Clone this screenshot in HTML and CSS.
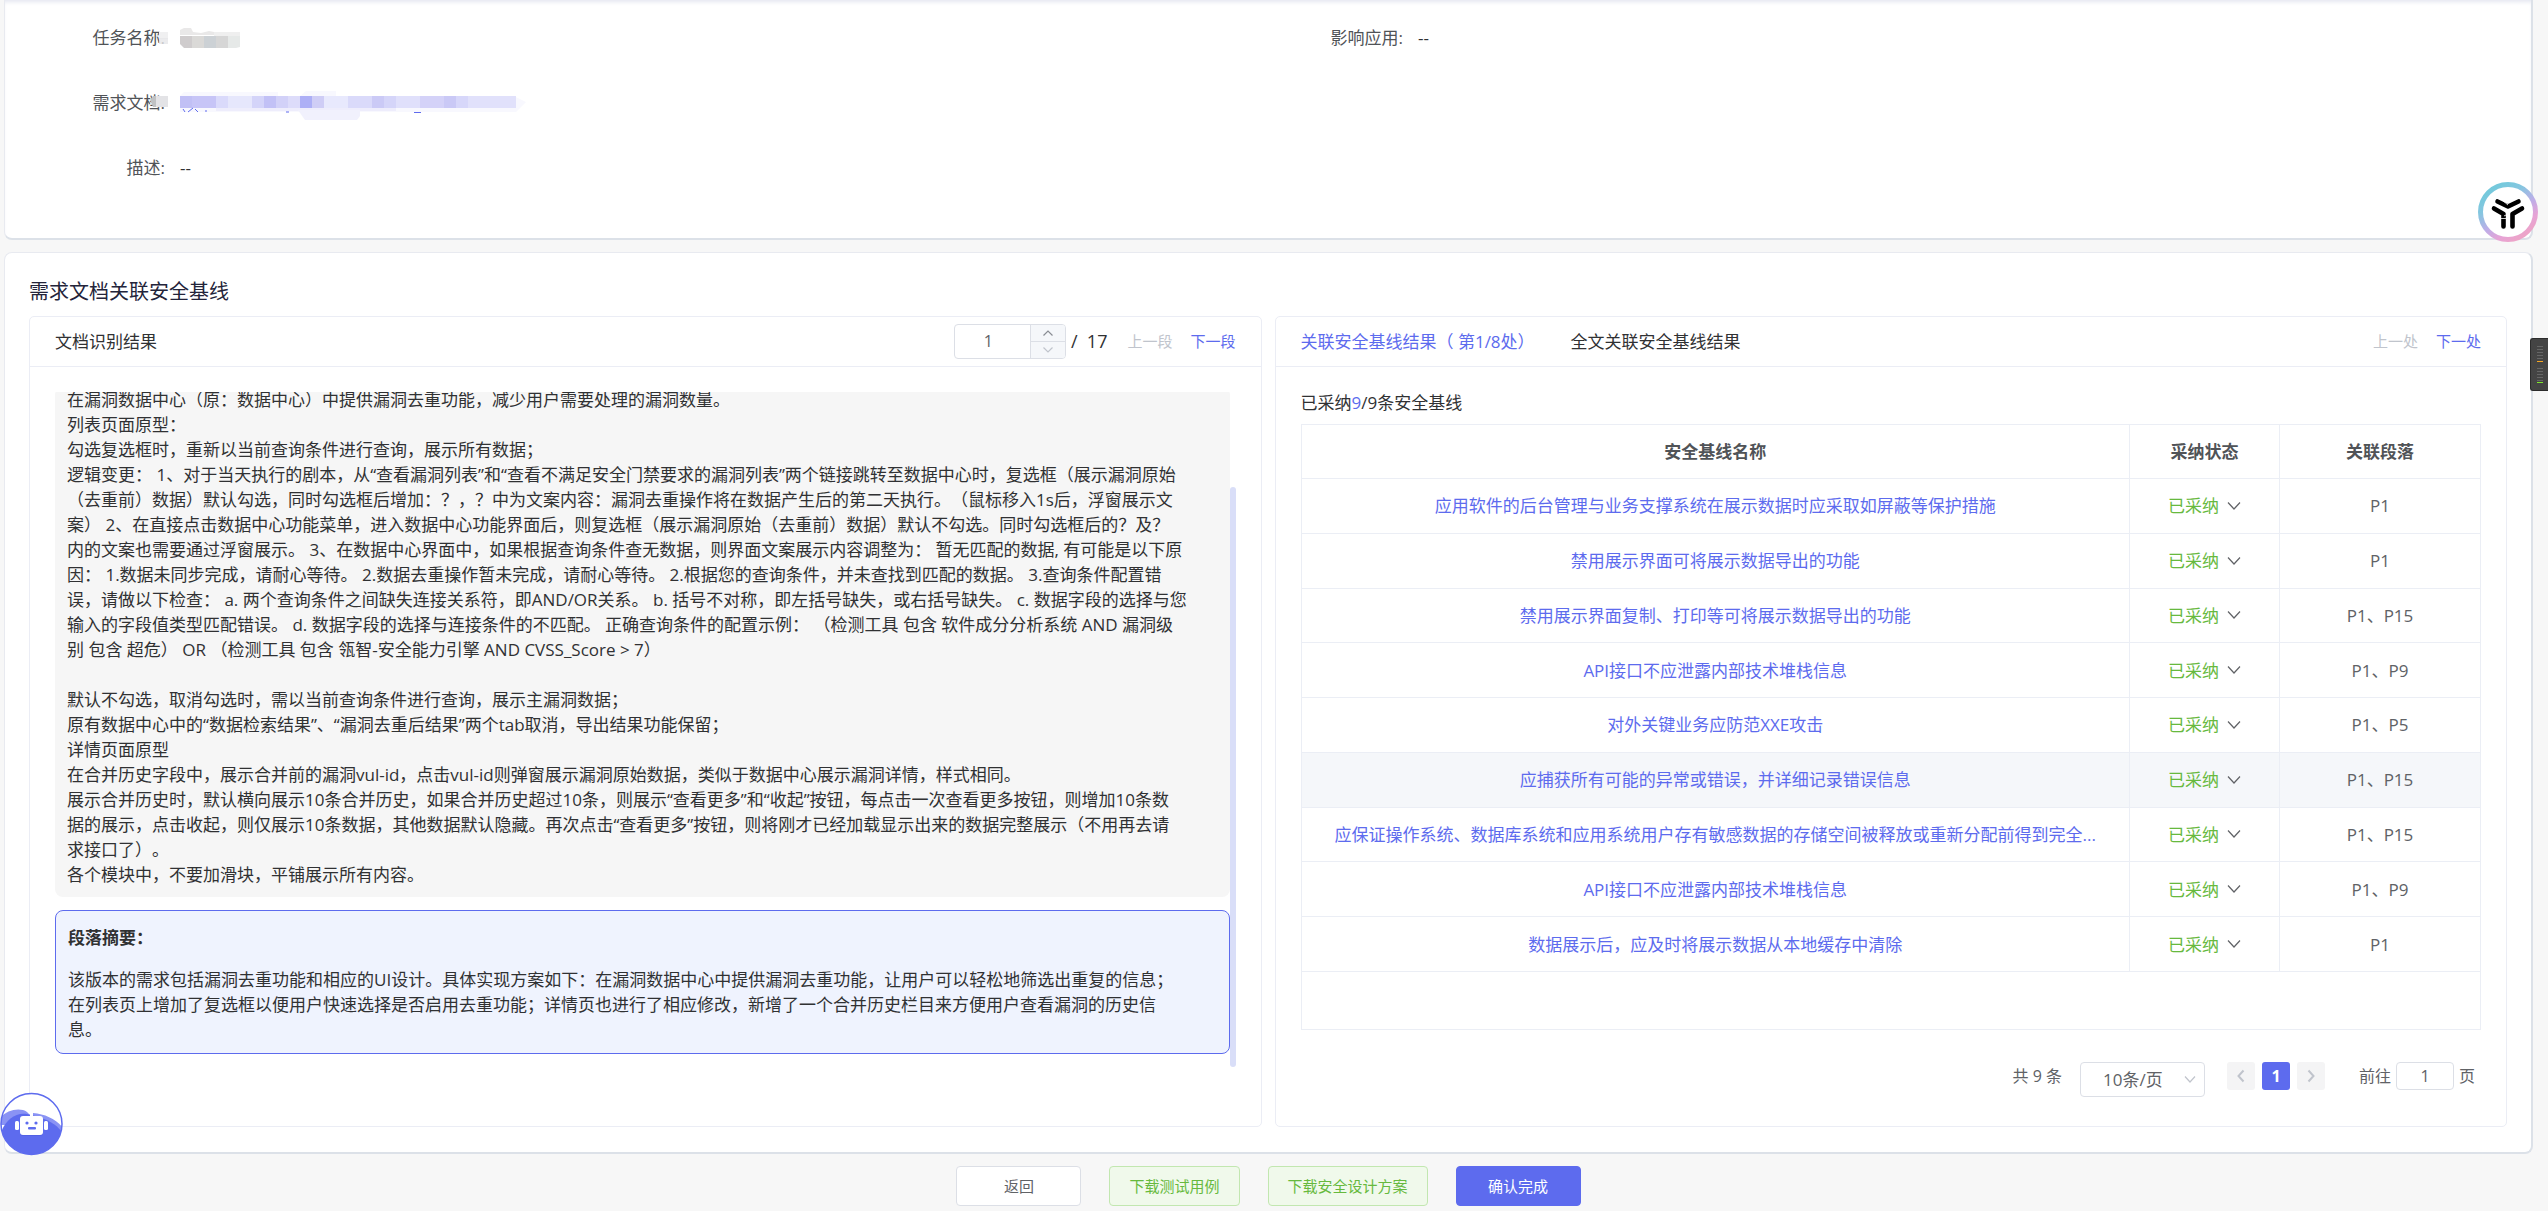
FILE: index.html
```html
<!DOCTYPE html>
<html lang="zh-CN">
<head>
<meta charset="utf-8">
<title>需求文档关联安全基线</title>
<link rel="stylesheet" href="styles.css">
</head>
<body>
<main class="page">
  <section class="card info">
    <dl class="info-col">
      <div class="info-row">
        <dt>任务名称:</dt>
        <dd>
          <svg class="mask" width="90" height="24" viewBox="-22 0 90 24" aria-hidden="true">
            <path fill="#f0f0f1" d="M-21 4h9v7h-9z"/><path fill="#e6e6e8" d="M-21 10h9v6h-9z" opacity=".8"/>
            <path fill="#e9e8e8" d="M0 7V2l4-2h7l2 4 8 1 8-2 5 1v3z"/><path fill="#efefef" d="M34 4h26v4H34z"/>
            <path fill="#cfcccd" d="M0 8h12v12H4l-4-4z"/><path fill="#dad9d7" d="M12 8h12v12H12z"/><path fill="#ccd1d5" d="M24 8h12v12H24z"/><path fill="#d6d6d6" d="M36 8h12v12H36z"/><path fill="#e6e9e8" d="M48 8h12v11l-4 1h-8z"/>
          </svg>
        </dd>
      </div>
      <div class="info-row">
        <dt>需求文档:</dt>
        <dd>
          <svg class="mask wide" width="370" height="30" viewBox="-32 0 370 30" aria-hidden="true">
            <path fill="#c0c2c4" d="M-30 8l3-4h3v11h-3z"/><path fill="#e3e3e6" d="M-24 4h12v11h-12z"/>
            <path fill="#f8f8fe" d="M4 0h94v4h22l6-5h30v5h178l12 6-10 10H0V4z"/>
            <g><path fill="#c1c0f5" d="M0 4h12v12H0z"/><path fill="#c7c5f7" d="M12 4h24v12H12z"/><path fill="#dadafb" d="M36 4h12v12H36z"/><path fill="#e6e7fc" d="M48 4h24v12H48z"/><path fill="#d4d4f9" d="M72 4h12v12H72z"/><path fill="#c2c1f6" d="M84 4h12v12H84z"/><path fill="#d2d1f8" d="M96 4h12v12H96z"/><path fill="#dddcfa" d="M108 4h12v12h-12z"/><path fill="#adaff6" d="M120 4h12v12h-12z"/><path fill="#cfcdf6" d="M132 4h12v12h-12z"/><path fill="#e8e9fd" d="M144 4h24v12h-24z"/><path fill="#dadafa" d="M168 4h24v12h-24z"/><path fill="#cbcaf6" d="M192 4h12v12h-12z"/><path fill="#d5d5f9" d="M204 4h12v12h-12z"/><path fill="#e0e0fb" d="M216 4h24v12h-24z"/><path fill="#d4d2f8" d="M240 4h24v12h-24z"/><path fill="#cac9f6" d="M264 4h12v12h-12z"/><path fill="#d7d7fa" d="M276 4h12v12h-12z"/><path fill="#e1e1fb" d="M288 4h48v12h-48z"/></g>
            <path fill="#eeedfc" d="M36 16h180v3H36z"/><path fill="#f1f1fd" d="M118 18h62v6l-3 4h-52z"/>
            <path stroke="#5f6bee" d="M3 17l2 3M13 16l-5 4M15 17l3 3M26 18v2M106 20h3M234 20.500h7"/>
          </svg>
        </dd>
      </div>
      <div class="info-row"><dt>描述:</dt><dd>--</dd></div>
    </dl>
    <dl class="info-col">
      <div class="info-row"><dt>影响应用:</dt><dd>--</dd></div>
    </dl>
  </section>

  <section class="card work">
    <h1>需求文档关联安全基线</h1>
    <div class="panels">
      <section class="panel">
        <header class="panel-head">
          <h2>文档识别结果</h2>
          <div class="pager">
            <div class="stepper">
              <input type="text" value="1" aria-label="当前段落">
              <div class="steps">
                <button type="button" aria-label="增加"><svg width="12" height="8" viewBox="0 0 12 8"><path d="M1.500 6.500L6 2l4.500 4.500" fill="none" stroke="#8a8d94" stroke-width="1.200"/></svg></button>
                <button type="button" aria-label="减少"><svg width="12" height="8" viewBox="0 0 12 8"><path d="M1.500 1.500L6 6l4.500-4.500" fill="none" stroke="#c0c4cc" stroke-width="1.200"/></svg></button>
              </div>
            </div>
            <span class="total">/&nbsp; 17</span>
            <button type="button" class="text-btn" disabled>上一段</button>
            <button type="button" class="text-btn">下一段</button>
          </div>
        </header>
        <div class="scroller">
          <div class="scroll-content">
            <div class="doc">在漏洞数据中心（原：数据中心）中提供漏洞去重功能，减少用户需要处理的漏洞数量。
列表页面原型：
勾选复选框时，重新以当前查询条件进行查询，展示所有数据；
逻辑变更： 1、对于当天执行的剧本，从“查看漏洞列表”和“查看不满足安全门禁要求的漏洞列表”两个链接跳转至数据中心时，复选框（展示漏洞原始
（去重前）数据）默认勾选，同时勾选框后增加：？，？中为文案内容：漏洞去重操作将在数据产生后的第二天执行。（鼠标移入1s后，浮窗展示文
案） 2、在直接点击数据中心功能菜单，进入数据中心功能界面后，则复选框（展示漏洞原始（去重前）数据）默认不勾选。同时勾选框后的？及？
内的文案也需要通过浮窗展示。 3、在数据中心界面中，如果根据查询条件查无数据，则界面文案展示内容调整为： 暂无匹配的数据, 有可能是以下原
因： 1.数据未同步完成，请耐心等待。 2.数据去重操作暂未完成，请耐心等待。 2.根据您的查询条件，并未查找到匹配的数据。 3.查询条件配置错
误，请做以下检查： a. 两个查询条件之间缺失连接关系符，即AND/OR关系。 b. 括号不对称，即左括号缺失，或右括号缺失。 c. 数据字段的选择与您
输入的字段值类型匹配错误。 d. 数据字段的选择与连接条件的不匹配。 正确查询条件的配置示例： （检测工具 包含 软件成分分析系统 AND 漏洞级
别 包含 超危） OR （检测工具 包含 瓴智-安全能力引擎 AND CVSS_Score &gt; 7）

默认不勾选，取消勾选时，需以当前查询条件进行查询，展示主漏洞数据；
原有数据中心中的“数据检索结果”、“漏洞去重后结果”两个tab取消，导出结果功能保留；
详情页面原型
在合并历史字段中，展示合并前的漏洞vul-id，点击vul-id则弹窗展示漏洞原始数据，类似于数据中心展示漏洞详情，样式相同。
展示合并历史时，默认横向展示10条合并历史，如果合并历史超过10条，则展示“查看更多”和“收起”按钮，每点击一次查看更多按钮，则增加10条数
据的展示，点击收起，则仅展示10条数据，其他数据默认隐藏。再次点击“查看更多”按钮，则将刚才已经加载显示出来的数据完整展示（不用再去请
求接口了）。
各个模块中，不要加滑块，平铺展示所有内容。</div>
            <div class="abstract">
              <h3>段落摘要：</h3>
              <p>该版本的需求包括漏洞去重功能和相应的UI设计。具体实现方案如下：在漏洞数据中心中提供漏洞去重功能，让用户可以轻松地筛选出重复的信息；
在列表页上增加了复选框以便用户快速选择是否启用去重功能；详情页也进行了相应修改，新增了一个合并历史栏目来方便用户查看漏洞的历史信
息。</p>
            </div>
          </div>
          <div class="scrollbar"><div class="thumb"></div></div>
        </div>
      </section>

      <section class="panel">
        <header class="panel-head">
          <nav class="tabs">
            <a href="#part" class="active">关联安全基线结果（ 第1/8处）</a>
            <a href="#all">全文关联安全基线结果</a>
          </nav>
          <div class="pager">
            <button type="button" class="text-btn" disabled>上一处</button>
            <button type="button" class="text-btn">下一处</button>
          </div>
        </header>
        <div class="result">
          <p class="adopted">已采纳<span>9</span>/9条安全基线</p>
          <div class="table-box">
            <table>
              <colgroup><col><col class="c-state"><col class="c-para"></colgroup>
              <thead><tr><th>安全基线名称</th><th>采纳状态</th><th>关联段落</th></tr></thead>
              <tbody>
                <tr><td><a href="#b1">应用软件的后台管理与业务支撑系统在展示数据时应采取如屏蔽等保护措施</a></td><td><button type="button" class="state">已采纳<svg width="14" height="10" viewBox="0 0 14 10"><path d="M1 1.500l6 6.500 6-6.500"/></svg></button></td><td>P1</td></tr>
                <tr><td><a href="#b2">禁用展示界面可将展示数据导出的功能</a></td><td><button type="button" class="state">已采纳<svg width="14" height="10" viewBox="0 0 14 10"><path d="M1 1.500l6 6.500 6-6.500"/></svg></button></td><td>P1</td></tr>
                <tr><td><a href="#b3">禁用展示界面复制、打印等可将展示数据导出的功能</a></td><td><button type="button" class="state">已采纳<svg width="14" height="10" viewBox="0 0 14 10"><path d="M1 1.500l6 6.500 6-6.500"/></svg></button></td><td>P1、P15</td></tr>
                <tr><td><a href="#b4">API接口不应泄露内部技术堆栈信息</a></td><td><button type="button" class="state">已采纳<svg width="14" height="10" viewBox="0 0 14 10"><path d="M1 1.500l6 6.500 6-6.500"/></svg></button></td><td>P1、P9</td></tr>
                <tr><td><a href="#b5">对外关键业务应防范XXE攻击</a></td><td><button type="button" class="state">已采纳<svg width="14" height="10" viewBox="0 0 14 10"><path d="M1 1.500l6 6.500 6-6.500"/></svg></button></td><td>P1、P5</td></tr>
                <tr class="hover"><td><a href="#b6">应捕获所有可能的异常或错误，并详细记录错误信息</a></td><td><button type="button" class="state">已采纳<svg width="14" height="10" viewBox="0 0 14 10"><path d="M1 1.500l6 6.500 6-6.500"/></svg></button></td><td>P1、P15</td></tr>
                <tr><td><a href="#b7">应保证操作系统、数据库系统和应用系统用户存有敏感数据的存储空间被释放或重新分配前得到完全...</a></td><td><button type="button" class="state">已采纳<svg width="14" height="10" viewBox="0 0 14 10"><path d="M1 1.500l6 6.500 6-6.500"/></svg></button></td><td>P1、P15</td></tr>
                <tr><td><a href="#b8">API接口不应泄露内部技术堆栈信息</a></td><td><button type="button" class="state">已采纳<svg width="14" height="10" viewBox="0 0 14 10"><path d="M1 1.500l6 6.500 6-6.500"/></svg></button></td><td>P1、P9</td></tr>
                <tr><td><a href="#b9">数据展示后，应及时将展示数据从本地缓存中清除</a></td><td><button type="button" class="state">已采纳<svg width="14" height="10" viewBox="0 0 14 10"><path d="M1 1.500l6 6.500 6-6.500"/></svg></button></td><td>P1</td></tr>
              </tbody>
            </table>
          </div>
          <div class="pagination">
            <span class="count">共 9 条</span>
            <div class="size">
              <select aria-label="每页条数"><option>10条/页</option></select>
              <svg width="12" height="10" viewBox="0 0 12 10"><path d="M1 1.500l5 5.500 5-5.500" fill="none" stroke="#c0c4cc" stroke-width="1.200"/></svg>
            </div>
            <div class="pages">
              <button type="button" aria-label="前一页" disabled><svg width="10" height="14" viewBox="0 0 10 14"><path d="M7.500 1.500L2.500 7l5 5.500"/></svg></button>
              <button type="button" class="current">1</button>
              <button type="button" aria-label="后一页" disabled><svg width="10" height="14" viewBox="0 0 10 14"><path d="M2.500 1.500l5 5.500-5 5.500"/></svg></button>
            </div>
            <label class="jump">前往<input type="text" value="1">页</label>
          </div>
        </div>
      </section>
    </div>
  </section>

  <footer class="actions">
    <button type="button" class="btn">返回</button>
    <button type="button" class="btn success">下载测试用例</button>
    <button type="button" class="btn success">下载安全设计方案</button>
    <button type="button" class="btn primary">确认完成</button>
  </footer>
</main>

<a href="#bot" class="float robot" aria-label="智能助手">
  <svg width="63" height="64" viewBox="0 0 63 64">
    <defs><clipPath id="face"><circle cx="31.500" cy="32" r="30.500"/></clipPath></defs>
    <circle cx="31.500" cy="32" r="30.500" fill="#fff"/>
    <g clip-path="url(#face)">
      <path fill="#8a93f4" d="M0 27c5-9 20-12 27-7l3 3v10H0zM33 21c12 1 23 6 30 15v6L33 28z"/>
      <path fill="#5d6bee" d="M2 38c4-10 14-18 25-16l8 2c12 3 21 8 27 16v25H0z"/>
    </g>
    <circle cx="31.500" cy="32" r="30.500" fill="none" stroke="#5d6bee" stroke-width="1.500"/>
    <path fill="#fff" d="M30 20h3v6h-3z"/>
    <rect x="20" y="25" width="23" height="19" rx="3" fill="#4353d8" opacity=".4"/>
    <rect x="20" y="24" width="23" height="19" rx="3" fill="#fff"/>
    <rect x="15" y="29" width="4" height="9" rx="1.500" fill="#fff"/><rect x="44" y="29" width="4" height="9" rx="1.500" fill="#fff"/>
    <circle cx="27" cy="31" r="1.600" fill="#5d6bee"/><circle cx="36" cy="31" r="1.600" fill="#5d6bee"/>
    <rect x="28" y="35" width="8" height="2.500" rx="1" fill="#5d6bee"/>
  </svg>
</a>
<a href="#brand" class="float brand" aria-label="助手">
  <svg width="60" height="60" viewBox="0 0 60 60">
    <defs><linearGradient id="ring" x1=".2" y1=".1" x2=".75" y2=".95"><stop offset="0" stop-color="#75c9dc"/><stop offset=".25" stop-color="#86c6e0"/><stop offset=".55" stop-color="#bdaee8"/><stop offset=".8" stop-color="#e6a3d6"/><stop offset="1" stop-color="#eda4c8"/></linearGradient></defs>
    <circle cx="30" cy="30" r="27.500" fill="#fff" stroke="url(#ring)" stroke-width="5"/>
    <path d="M19.500 19.500l10.500 5L40.500 19.500M16 26.500l9.500 5.500v12.500M44 26.500l-9.500 5.500v12.500" fill="none" stroke="#000" stroke-width="4.600" stroke-linecap="round" stroke-linejoin="round"/>
    <path d="M24 18l6 5M26 34l2-1M23 36.500h5" stroke="#fff" stroke-width=".8"/>
  </svg>
</a>
<div class="float meter" aria-hidden="true">
  <div class="bars orange"></div>
  <div class="bars green"></div>
</div>
</body>
</html>
```
FILE: styles.css
```css
* { box-sizing: border-box; }

body {
  margin: 0;
  background: #f7f7f7;
  color: #303133;
  font: 17px/25px "Open Sans", "Noto Sans CJK SC", sans-serif;
  text-spacing-trim: space-all;
}

h1, h2, h3, p, dl, dd { margin: 0; }
h1, h2 { font-weight: 400; }
a { color: #5d6bee; text-decoration: none; }

button, input, select {
  margin: 0;
  padding: 0;
  border: 0;
  background: none;
  color: inherit;
  font: inherit;
}

.page {
  display: flex;
  flex-direction: column;
  padding: 0 15px 0 4px;
}

.card {
  background: #fff;
  border: 1px solid #e8eaf0;
  border-right: 2px solid #dce1e8;
  border-bottom: 2px solid #dce1e8;
  border-radius: 8px;
}

/* task info */
.info {
  display: flex;
  padding: 25px 25px 58px;
  border-top: 0;
  border-radius: 0 0 8px 8px;
  box-shadow: inset 0 4px 4px -2px #e4e6f0;
}
.info-col { flex: 1; display: flex; flex-direction: column; gap: 40px; }
.info-row { display: flex; gap: 15px; height: 25px; }
.info-row dt { width: 135px; text-align: right; color: #505357; }
.info-row dd { position: relative; }
.mask { position: absolute; top: 3px; left: -22px; }
.mask.wide { top: 2px; left: -32px; overflow: visible; }

/* baseline workspace */
.work { margin-top: 12px; padding: 26px 24px 25px; }
.work h1 { font-size: 20px; line-height: 26px; color: #23243a; }
.panels { display: grid; grid-template-columns: 1fr 1fr; gap: 13px; margin-top: 11px; }

.panel {
  display: flex;
  flex-direction: column;
  min-width: 0;
  border: 1px solid #ebedf5;
  border-radius: 5px;
}
.panel-head {
  display: flex;
  align-items: center;
  justify-content: space-between;
  height: 50px;
  padding: 0 25px;
  border-bottom: 1px solid #ebedf5;
}
.panel-head h2 { font-size: 17px; }

.pager { display: flex; align-items: center; gap: 18px; }
.stepper {
  display: flex;
  width: 112px;
  height: 35px;
  border: 1px solid #dcdfe6;
  border-radius: 4px;
  overflow: hidden;
}
.stepper input { flex: 1; min-width: 0; padding-right: 8px; text-align: center; font-size: 16px; color: #606266; }
.steps {
  display: flex;
  flex-direction: column;
  width: 35px;
  border-left: 1px solid #dcdfe6;
  background: #f5f7fa;
}
.steps button { flex: 1; display: flex; align-items: center; justify-content: center; }
.steps button + button { border-top: 1px solid #dcdfe6; }
.total { margin: 0 2px 0 -13px; font-size: 18px; }
.text-btn { font-size: 15px; color: #5d6bee; }
.text-btn:disabled { color: #c0c4cc; }

/* recognised document */
.scroller { display: flex; margin: 25px 25px 59px; overflow: hidden; }
.scroll-content { flex: 1; min-width: 0; padding-bottom: 13px; }
.doc {
  margin-top: -5px;
  padding: 0 12px 10px;
  border-radius: 8px;
  background: #f6f6f6;
  white-space: pre-wrap;
}
.abstract {
  margin-top: 13px;
  padding: 14px 12px 11px;
  border: 1px solid #5d6bee;
  border-radius: 8px;
  background: #eff3fe;
}
.abstract h3 { margin-bottom: 17px; font-size: 17px; font-weight: 700; }
.abstract p { white-space: pre-wrap; }
.scrollbar { display: flex; flex-direction: column; justify-content: flex-end; width: 6px; }
.thumb { height: 86%; border-radius: 3px; background: #d9def8; }

/* related baselines */
.tabs { display: flex; gap: 36px; }
.tabs a { color: #303133; }
.tabs .active { color: #5d6bee; }
.result { padding: 23px 25px 29px; }
.adopted span { color: #5d6bee; }

.table-box { height: 606px; margin-top: 9px; border: 1px solid #ebeef5; }
table {
  width: 100%;
  height: 547px;
  border-collapse: separate;
  border-spacing: 0;
  table-layout: fixed;
  color: #606266;
}
.c-state { width: 150px; }
.c-para { width: 200px; }
th, td {
  padding: 0 12px;
  border-bottom: 1px solid #ebeef5;
  border-right: 1px solid #ebeef5;
  text-align: center;
  white-space: nowrap;
  overflow: hidden;
  text-overflow: ellipsis;
}
th:last-child, td:last-child { border-right: 0; }
th { height: 54px; font-weight: 700; color: #505357; }
.hover td { background: #f5f7fa; }
.state { display: inline-flex; align-items: center; gap: 8px; color: #67b93e; }
.state path { fill: none; stroke: #606266; stroke-width: 1.2px; }

.pagination {
  display: flex;
  align-items: flex-start;
  justify-content: flex-end;
  margin-top: 32px;
  padding-right: 6px;
  font-size: 16px;
  line-height: 28px;
  color: #606266;
}
.size { position: relative; width: 125px; margin-left: 18px; }
.size select {
  width: 100%;
  height: 35px;
  padding: 0 40px 0 22px;
  border: 1px solid #dcdfe6;
  border-radius: 4px;
  appearance: none;
  font-size: 17px;
}
.size svg { position: absolute; top: 13px; right: 9px; }
.pages { display: flex; gap: 7px; margin: 0 34px 0 22px; }
.pages button {
  display: flex;
  align-items: center;
  justify-content: center;
  width: 28px;
  height: 28px;
  border-radius: 3px;
  background: #f4f4f5;
}
.pages path { fill: none; stroke: #c0c4cc; stroke-width: 2px; }
.pages .current { background: #5d6bee; color: #fff; font-weight: 700; }
.jump { display: flex; gap: 5px; }
.jump input {
  width: 58px;
  height: 28px;
  border: 1px solid #dcdfe6;
  border-radius: 4px;
  text-align: center;
}

/* bottom actions */
.actions { display: flex; justify-content: center; gap: 28px; padding: 12px 0 5px; }
.btn {
  min-width: 125px;
  height: 40px;
  padding: 0 19px;
  border: 1px solid #dcdfe6;
  border-radius: 4px;
  background: #fff;
  color: #606266;
  font-size: 15px;
}
.btn.success { border-color: #c2e7b0; background: #f0f9eb; color: #67b93e; }
.btn.primary { border-color: #5d6bee; background: #5d6bee; color: #fff; }

/* floating widgets */
.float { position: fixed; }
.float svg { display: block; }
.robot { left: 0; bottom: 55px; }
.brand { right: 10px; top: 182px; }
.meter {
  right: 0;
  top: 338px;
  display: flex;
  flex-direction: column;
  gap: 6px;
  width: 18px;
  height: 53px;
  padding: 7px 6px;
  border: 1px solid #2c2c2c;
  border-right: 0;
  border-radius: 3px 0 0 3px;
  background: #444;
}
.bars {
  width: 6px;
  height: 17px;
  background: repeating-linear-gradient(#666 0 1px, transparent 1px 3px);
}
.orange { border-bottom: 1px solid #f5a623; }
.green { border-bottom: 1px solid #7ee72b; }
```
